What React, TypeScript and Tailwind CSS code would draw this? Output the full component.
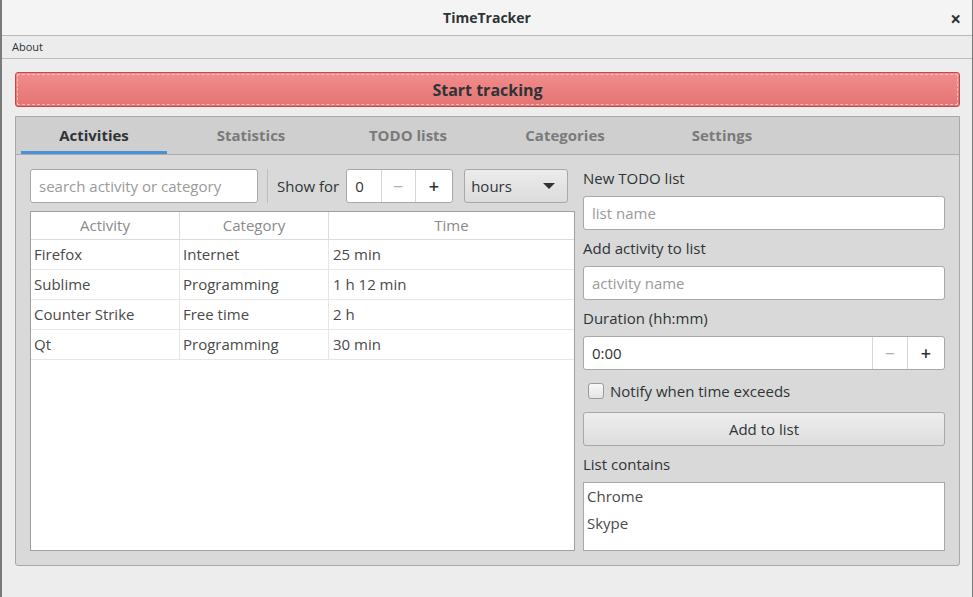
import React from "react";

const rows = [
  { activity: "Firefox", category: "Internet", time: "25 min" },
  { activity: "Sublime", category: "Programming", time: "1 h 12 min" },
  { activity: "Counter Strike", category: "Free time", time: "2 h" },
  { activity: "Qt", category: "Programming", time: "30 min" },
];

const tabs = ["Activities", "Statistics", "TODO lists", "Categories", "Settings"];

const fieldClass =
  "h-[34px] rounded-[3px] border border-[#a8a8a8] bg-white flex items-center px-2 text-[15px]";

const SpinButtons: React.FC<{ wide?: boolean }> = ({ wide }) => (
  <>
    <div
      className={`${wide ? "w-[35px]" : "w-[34px]"} h-full border-l border-[#d6d6d6] flex items-center justify-center text-[#b0b0b0] text-[18px]`}
    >
      −
    </div>
    <div
      className={`${wide ? "w-[37px]" : "w-[38px]"} h-full border-l border-[#d6d6d6] flex items-center justify-center text-[#2e3436] text-[18px] font-semibold`}
    >
      +
    </div>
  </>
);

const Label: React.FC<{ children: React.ReactNode }> = ({ children }) => (
  <div className="h-9 flex items-center text-[15px] text-[#2e3436]">{children}</div>
);

const App: React.FC = () => {
  return (
    <div
      className="w-[973px] h-[597px] bg-[#ededed] border-l-2 border-r border-[#7a7a7a] flex flex-col overflow-hidden"
      style={{ fontFamily: '"Open Sans", "Noto Sans", sans-serif' }}
    >
      {/* title bar */}
      <header className="h-[36px] shrink-0 bg-[#f4f4f4] border-b border-[#b8b8b8] relative flex items-center justify-center">
        <span className="text-[14px] font-bold text-[#2e3436]">TimeTracker</span>
        <span className="absolute right-[11px] top-[5px] text-[19px] font-bold text-[#2e3436]">×</span>
      </header>

      {/* menu bar */}
      <nav className="h-[23px] shrink-0 bg-[#ececec] border-b border-[#bdbdbd] flex items-center px-[10px]">
        <span className="text-[11px] text-[#2e3436]">About</span>
      </nav>

      <main className="flex-1 flex flex-col pl-[13px] pr-[12px] pt-[13px]">
        <button
          type="button"
          className="h-[35px] w-full rounded-[3px] border border-[#c04a4a] bg-gradient-to-b from-[#f28d8d] to-[#e47373] outline-1 outline-dashed outline-offset-[-3px] outline-[#f6bdbd] text-[16px] font-bold text-[#2e3436]"
        >
          Start tracking
        </button>

        <section className="mt-[9px] h-[450px] rounded-b-[3px] border border-[#a8a8a8] bg-[#d9d9d9] flex flex-col">
          <div className="h-[38px] shrink-0 bg-[#cfcfcf] border-b border-[#ababab] flex px-[5px]">
            {tabs.map((tab, i) => (
              <div
                key={tab}
                className={`w-[146px] ${i === 0 ? "" : "ml-[11px]"} h-full flex items-center justify-center text-[15px] font-bold relative ${i === 0 ? "text-[#2e3436]" : "text-[#7a7a7a]"}`}
              >
                {tab}
                {i === 0 && <div className="absolute left-0 right-0 bottom-0 h-[3px] bg-[#4a90d9]" />}
              </div>
            ))}
          </div>

          <div className="flex-1 flex gap-[8px] px-[14px] pt-[5px] pb-[14px]">
            {/* left column */}
            <div className="w-[545px] shrink-0 flex flex-col pt-[9px]">
              <div className="flex items-center h-[34px]">
                <div className={`${fieldClass} w-[228px] text-[#9a9a9a]`}>search activity or category</div>
                <div className="w-px h-[34px] bg-[#bdbdbd] mx-[9px]" />
                <span className="text-[15px] text-[#2e3436] mr-[7px]">Show for</span>
                <div className="h-[34px] w-[107px] rounded-[3px] border border-[#a8a8a8] bg-white flex items-center text-[15px] text-[#2e3436]">
                  <div className="w-[34px] pl-[8px]">0</div>
                  <SpinButtons />
                </div>
                <div className="ml-[11px] h-[34px] w-[104px] rounded-[3px] border border-[#a8a8a8] bg-gradient-to-b from-[#ececec] to-[#dcdcdc] flex items-center justify-between px-[6px] text-[15px] text-[#2e3436]">
                  <span>hours</span>
                  <svg width="12" height="7" viewBox="0 0 12 7" className="mr-[6px]">
                    <path d="M0 0 L12 0 L6 6 Z" fill="#2e3436" />
                  </svg>
                </div>
              </div>

              <div className="mt-[8px] flex-1 bg-white border border-[#a0a0a0] text-[15px]">
                <div className="flex h-[28px] border-b border-[#dcdcdc] text-[#8a8a8a]">
                  <div className="w-[149px] border-r border-[#dcdcdc] flex items-center justify-center">Activity</div>
                  <div className="w-[149px] border-r border-[#dcdcdc] flex items-center justify-center">Category</div>
                  <div className="flex-1 flex items-center justify-center">Time</div>
                </div>
                {rows.map((row) => (
                  <div key={row.activity} className="flex h-[30px] border-b border-[#e6e6e6] text-[#4a4a4a]">
                    <div className="w-[149px] border-r border-[#e6e6e6] flex items-center px-[3px]">{row.activity}</div>
                    <div className="w-[149px] border-r border-[#e6e6e6] flex items-center px-[3px]">{row.category}</div>
                    <div className="flex-1 flex items-center px-[4px]">{row.time}</div>
                  </div>
                ))}
              </div>
            </div>

            {/* right column */}
            <div className="w-[362px] shrink-0 flex flex-col">
              <Label>New TODO list</Label>
              <div className={`${fieldClass} text-[#9a9a9a]`}>list name</div>
              <Label>Add activity to list</Label>
              <div className={`${fieldClass} text-[#9a9a9a]`}>activity name</div>
              <Label>Duration (hh:mm)</Label>
              <div className="h-[34px] rounded-[3px] border border-[#a8a8a8] bg-white flex items-center text-[15px] text-[#2e3436]">
                <div className="flex-1 pl-[8px]">0:00</div>
                <SpinButtons wide />
              </div>
              <div className="h-[42px] flex items-center pl-[5px] gap-[6px]">
                <div className="w-[16px] h-[16px] rounded-[3px] border border-[#9a9a9a] bg-gradient-to-b from-[#f8f8f8] to-[#e4e4e4]" />
                <span className="text-[15px] text-[#2e3436]">Notify when time exceeds</span>
              </div>
              <button
                type="button"
                className="h-[34px] rounded-[3px] border border-[#a8a8a8] bg-gradient-to-b from-[#ededed] to-[#dddddd] text-[15px] text-[#2e3436]"
              >
                Add to list
              </button>
              <Label>List contains</Label>
              <div className="flex-1 bg-white border border-[#a8a8a8] px-[3px] text-[15px] text-[#4a4a4a] flex flex-col">
                <div className="h-[27px] flex items-center">Chrome</div>
                <div className="h-[27px] flex items-center">Skype</div>
              </div>
            </div>
          </div>
        </section>
      </main>
    </div>
  );
};

export default App;
